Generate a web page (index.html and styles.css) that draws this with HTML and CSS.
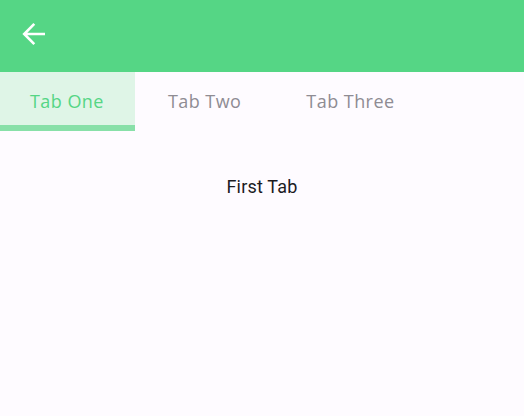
FILE: index.html
```html
<!DOCTYPE html>
<html>
<head>
<meta charset="utf-8">
<link rel="stylesheet" href="styles.css">
</head>
<body>
<header class="appbar">
  <button class="back" aria-label="Back">
    <svg width="24" height="24" viewBox="0 0 24 24"><path d="M23 12H2.5M12.3 1.8 2.2 12l10.1 10.2" fill="none" stroke="#fff" stroke-width="2.6"/></svg>
  </button>
</header>
<nav class="tabs">
  <div class="tab active">Tab One</div>
  <div class="tab">Tab Two</div>
  <div class="tab">Tab Three</div>
</nav>
<main class="content">First Tab</main>
</body>
</html>
```
FILE: styles.css
```css
html, body { margin: 0; padding: 0; background: #fefbff; }
body { width: 524px; height: 416px; overflow: hidden; }
.appbar { height: 72px; background: #55d685; display: flex; align-items: flex-start; padding: 22px 0 0 22px; box-sizing: border-box; }
.back { background: none; border: 0; padding: 0; width: 24px; height: 24px; display: flex; }
.tabs { display: flex; height: 59px; }
.tab { font-family: "Open Sans", sans-serif; font-weight: 400; font-size: 18px; letter-spacing: 0.45px; color: #8f8c93; padding: 5px 32px 0 33px; display: flex; align-items: center; box-sizing: border-box; height: 53px; }
.tab.active { color: #55d685; background: #dff5e7; border-bottom: 6px solid #88e0a8; height: 59px; padding-left: 30px; padding-right: 31px; }
.content { font-family: Roboto, sans-serif; font-size: 18px; letter-spacing: 0.2px; color: #1c1b1f; text-align: center; padding-top: 45px; }
```
